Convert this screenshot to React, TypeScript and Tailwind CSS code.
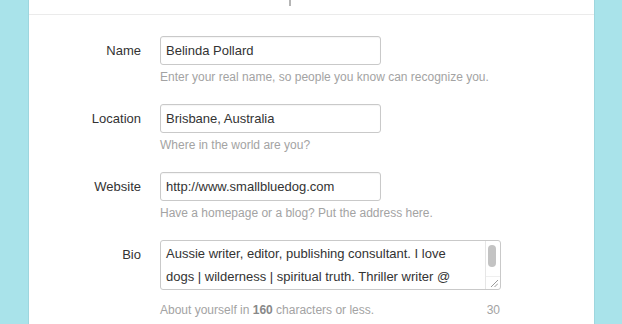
import React from "react";

const font = { fontFamily: '"Liberation Sans", Arial, sans-serif' };

const Field = ({ label, value, hint }: { label: string; value: string; hint: string }) => (
  <div className="flex items-start mb-[19px]">
    <label className="w-[112px] shrink-0 text-right pt-[6px] text-[13px] leading-[17px] text-[#333]">{label}</label>
    <div className="ml-[19px]">
      <div className="w-[221px] h-[29px] border border-[#c9c9c9] rounded-[3px] px-[5px] flex items-center text-[13px] text-[#333] bg-white shadow-[inset_0_1px_1px_rgba(0,0,0,0.04)]">
        {value}
      </div>
      <p className="mt-[5px] text-[12px] leading-[15px] text-[#a3a3a3]">{hint}</p>
    </div>
  </div>
);

export default function App() {
  return (
    <div className="w-[622px] h-[324px] overflow-hidden bg-[#a9e3ea]" style={font}>
      <div className="ml-[28px] w-[567px] h-full bg-white border-x border-[#9ed6de]">
        <div className="h-[15px] border-b border-[#ebebeb] pl-[260px]">
          <div className="w-[2px] h-[6px] bg-[#b5b5b5]" />
        </div>

        <div className="pt-[21px]">
          <Field label="Name" value="Belinda Pollard" hint="Enter your real name, so people you know can recognize you." />
          <Field label="Location" value="Brisbane, Australia" hint="Where in the world are you?" />
          <Field label="Website" value="http://www.smallbluedog.com" hint="Have a homepage or a blog? Put the address here." />

          <div className="flex items-start">
            <label className="w-[112px] shrink-0 text-right pt-[6px] text-[13px] leading-[17px] text-[#333]">Bio</label>
            <div className="ml-[19px] w-[341px]">
              <div className="h-[50px] border border-[#c9c9c9] rounded-[3px] flex bg-white overflow-hidden">
                <div className="flex-1 pl-[5px] pt-[1px] text-[13px] leading-[23px] text-[#333] whitespace-nowrap overflow-hidden">
                  <div>Aussie writer, editor, publishing consultant. I love</div>
                  <div>dogs | wilderness | spiritual truth. Thriller writer @</div>
                </div>
                <div className="w-[15px] border-l border-[#e6e6e6] flex flex-col">
                  <div className="flex-1 pt-[4px] pl-[2px]">
                    <div className="w-[8px] h-[22px] rounded-full bg-[#c3c3c3]" />
                  </div>
                  <div className="h-[13px] border-t border-[#efefef] flex items-end justify-end pr-[2px] pb-[2px]">
                    <svg width="8" height="8" viewBox="0 0 8 8">
                      <path d="M1 8 L8 1 M4.5 8 L8 4.5" stroke="#9a9a9a" strokeWidth="1" />
                    </svg>
                  </div>
                </div>
              </div>
              <div className="mt-[13px] flex justify-between text-[12px] leading-[15px] text-[#a3a3a3]">
                <span>
                  About yourself in <b className="text-[#888]">160</b> characters or less.
                </span>
                <span className="pr-[1px]">30</span>
              </div>
            </div>
          </div>
        </div>
      </div>
    </div>
  );
}
